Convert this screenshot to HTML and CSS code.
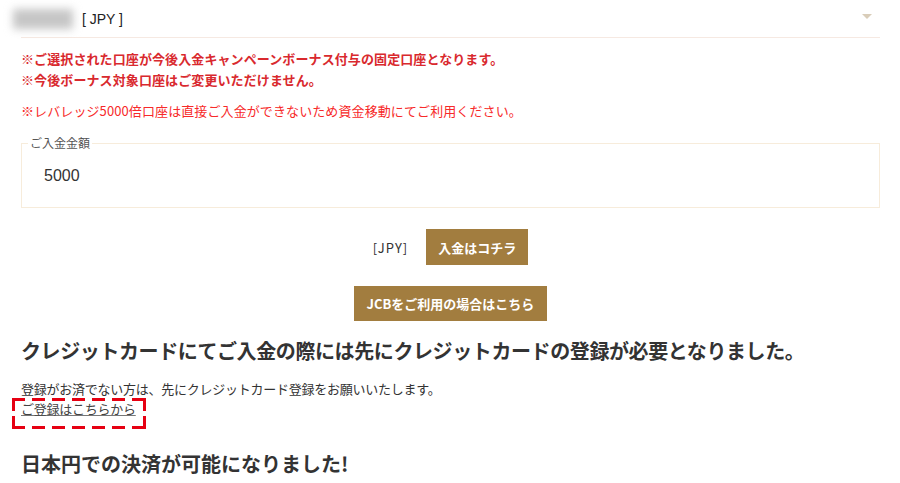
FILE: index.html
```html
<!DOCTYPE html>
<html lang="ja">
<head>
  <meta charset="UTF-8">
  <title>ご入金</title>
  <link rel="stylesheet" href="styles.css">
</head>
<body>
  <div class="wrap">

    <div class="account-select">
      <span class="account-name"><span class="blur"></span>[ JPY ]</span>
      <span class="arrow"></span>
    </div>

    <p class="notice">※ご選択された口座が今後入金キャンペーンボーナス付与の固定口座となります。<br>※今後ボーナス対象口座はご変更いただけません。</p>
    <p class="notice-light">※レバレッジ5000倍口座は直接ご入金ができないため資金移動にてご利用ください。</p>

    <fieldset class="amount">
      <legend>ご入金金額</legend>
      <input type="text" value="5000">
    </fieldset>

    <div class="deposit-row">
      <span class="currency">[JPY]</span>
      <button class="btn">入金はコチラ</button>
    </div>

    <div class="jcb-row">
      <button class="btn btn-wide">JCBをご利用の場合はこちら</button>
    </div>

    <h2>クレジットカードにてご入金の際には先にクレジットカードの登録が必要となりました。</h2>
    <p class="text">登録がお済でない方は、先にクレジットカード登録をお願いいたします。<br><a href="#" class="reg-link">ご登録はこちらから</a></p>

    <h2 class="second">日本円での決済が可能になりました!</h2>
  </div>
</body>
</html>
```

FILE: styles.css
```css
body {
  margin: 0;
  font-family: "Noto Sans CJK JP", sans-serif;
  color: #333;
  background: #fff;
}
.wrap {
  width: 859px;
  padding: 0 20px 0 21px;
}
.account-select {
  height: 37px;
  border-bottom: 1px solid #f6e9e2;
  display: flex;
  align-items: center;
  justify-content: space-between;
  padding-right: 8px;
}
.account-name {
  font-family: "Liberation Sans", Arial, sans-serif;
  font-size: 14px;
  color: #222;
  display: flex;
  align-items: center;
}
.blur {
  display: inline-block;
  width: 60px;
  height: 20px;
  margin-left: -8px;
  margin-right: 9px;
  background: #c6c6c6;
  filter: blur(4px);
}
.arrow {
  width: 0;
  height: 0;
  border-left: 5px solid transparent;
  border-right: 5px solid transparent;
  border-top: 5px solid #d9cdb9;
  margin-bottom: 4px;
}
.notice {
  margin: 10px 0 0;
  font-size: 13px;
  line-height: 21px;
  font-weight: bold;
  letter-spacing: 0.1px;
  color: #d9292e;
}
.notice-light {
  margin: 10px 0 0;
  font-size: 13px;
  line-height: 21px;
  letter-spacing: 0.1px;
  color: #f72a2a;
}
.amount {
  margin: 14px 0 0;
  padding: 0 6px 0;
  height: 73px;
  box-sizing: border-box;
  border: 1px solid #f7ecdb;
}
.amount legend {
  padding: 0 2px;
  font-size: 12px;
  line-height: 16px;
  color: #555;
}
.amount input {
  border: none;
  outline: none;
  padding: 16px 16px 0;
  width: 300px;
  font-family: "Liberation Sans", Arial, sans-serif;
  font-size: 16px;
  color: #333;
  background: transparent;
}
.deposit-row {
  margin-top: 21px;
  display: flex;
  justify-content: center;
  align-items: center;
  gap: 18px;
}
.currency {
  font-size: 13px;
  letter-spacing: 1px;
  color: #333;
}
.btn {
  height: 36px;
  padding: 0 12px;
  background: #a27d3f;
  border: none;
  color: #fff;
  font-family: "Noto Sans CJK JP", sans-serif;
  font-size: 13px;
  font-weight: bold;
}
.btn-wide {
  height: 35px;
  padding: 0 13px;
}
.jcb-row {
  margin-top: 21px;
  display: flex;
  justify-content: center;
}
h2 {
  margin: 15px 0 0;
  font-size: 20px;
  line-height: 30px;
  font-weight: bold;
  letter-spacing: -0.4px;
  color: #333;
}
.text {
  margin: 13px 0 0;
  font-size: 13px;
  line-height: 20px;
  letter-spacing: -0.25px;
  color: #333;
}
.reg-link {
  position: relative;
  color: #444;
  text-decoration: underline;
  text-decoration-color: #777;
}
.reg-link::after {
  content: "";
  position: absolute;
  left: -9px;
  right: -10px;
  top: -1px;
  bottom: -11px;
  background:
    repeating-linear-gradient(90deg, #e60012 0 13px, transparent 13px 20px) left top / 100% 3px no-repeat,
    repeating-linear-gradient(90deg, #e60012 0 13px, transparent 13px 20px) left bottom / 100% 3px no-repeat,
    repeating-linear-gradient(180deg, #e60012 0 13px, transparent 13px 18px) left top / 3px 100% no-repeat,
    repeating-linear-gradient(180deg, #e60012 0 13px, transparent 13px 18px) right top / 3px 100% no-repeat;
}
h2.second {
  margin-top: 30px;
  letter-spacing: 0;
}
```
